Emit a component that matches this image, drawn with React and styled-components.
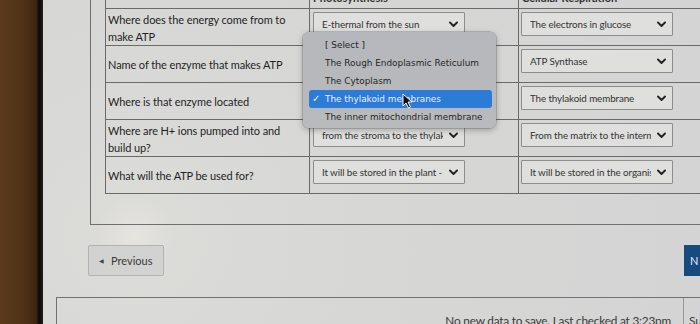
import React from "react";
import styled, { createGlobalStyle } from "styled-components";

const Global = createGlobalStyle`
  html, body { margin: 0; padding: 0; }
  body { width: 700px; height: 324px; overflow: hidden; background: #4a2f16; }
`;

const Frame = styled.div`
  position: relative;
  display: flex;
  width: 700px;
  height: 324px;
  overflow: hidden;
  font-family: Lato, "Open Sans", sans-serif;
`;

const Desk = styled.div`
  flex: none;
  width: 37px;
  background: linear-gradient(90deg, #5b3b1c 0%, #4d3116 70%, #3b2410 100%);
`;

const Bezel = styled.div`
  flex: none;
  width: 6px;
  background: linear-gradient(90deg, #24180e 0%, #0b0b0b 45%, #202020 100%);
`;

const Screen = styled.div`
  position: relative;
  flex: 1;
  display: flex;
  flex-direction: column;
  overflow: hidden;
  background: radial-gradient(circle at 92px 236px, #e6e4df 0, #dbdbd8 40px, #d7d8d6 220px, #d3d4d3 100%);
`;

const Panel = styled.div`
  flex: none;
  margin-left: 47px;
  width: 720px;
  border-left: 1px solid #6f6f6f;
  border-bottom: 1px solid #6f6f6f;
  padding: 0 0 30px 14px;
`;

const Table = styled.div`
  margin-top: -13px;
  display: grid;
  grid-template-columns: 204px 209px 220px;
  grid-auto-rows: 37px;
  grid-template-rows: 22px;
  border-left: 1px solid #6a6a6a;
`;

const Cell = styled.div`
  box-sizing: border-box;
  border-right: 1px solid #6a6a6a;
  border-bottom: 1px solid #6a6a6a;
  color: #262626;
`;

const HeadCell = styled(Cell)`
  display: flex;
  align-items: flex-end;
  padding: 0 0 4px 3px;
  font-size: 11px;
  font-weight: 700;
  line-height: 12px;
  color: #333;
`;

const Question = styled(Cell)`
  display: flex;
  align-items: center;
  padding: 1px 4px 0 2px;
  font-size: 11px;
  line-height: 17px;
  letter-spacing: -0.1px;
  color: #1f1f1f;
`;

const AnswerCell = styled(Cell)`
  padding: 3px 0 0 ${(p) => p.$pad || 3}px;
`;

const Select = styled.div`
  box-sizing: border-box;
  display: flex;
  align-items: center;
  justify-content: space-between;
  gap: 6px;
  width: 152px;
  height: 24px;
  padding: 0 6px 0 8px;
  border: 1px solid #8d8d8d;
  border-radius: 1px;
  background: #dfdfdd;
  font-size: 9.8px;
  letter-spacing: -0.1px;
  color: #333;
  white-space: nowrap;
`;

const SelectText = styled.span`
  overflow: hidden;
  flex: 1;
`;

const Chevron = () => (
  <svg width="9" height="7" viewBox="0 0 9 7">
    <polyline points="1,1.5 4.5,5 8,1.5" fill="none" stroke="#222" strokeWidth="1.9" strokeLinecap="round" strokeLinejoin="round" />
  </svg>
);

const Nav = styled.div`
  flex: none;
  display: flex;
  align-items: stretch;
  height: 31px;
  margin-top: 20px;
`;

const PrevButton = styled.div`
  box-sizing: border-box;
  display: flex;
  align-items: center;
  gap: 7px;
  margin-left: 45px;
  width: 76px;
  padding-left: 10px;
  border: 1px solid #b2b2b0;
  border-radius: 2px;
  background: #d2d3d1;
  font-size: 11px;
  color: #3a3a3a;
`;

const Tri = styled.span`
  font-size: 6px;
  color: #444;
`;

const NextButton = styled.div`
  flex: none;
  margin-left: auto;
  margin-right: -24px;
  width: 40px;
  padding-left: 6px;
  box-sizing: border-box;
  display: flex;
  align-items: center;
  background: #174a7f;
  color: #e8eef5;
  font-size: 11px;
`;

const StatusBar = styled.div`
  flex: none;
  display: flex;
  margin-top: 21px;
  margin-left: 13px;
  margin-right: -44px;
  border-top: 1px solid #717171;
  border-left: 1px solid #717171;
  height: 40px;
`;

const Status = styled.div`
  flex: 1;
  text-align: right;
  padding: 15px 12px 0 0;
  font-size: 11.8px;
  color: #3a3a3a;
  letter-spacing: -0.2px;
`;

const SaveCell = styled.div`
  flex: none;
  width: 55px;
  padding: 15px 0 0 5px;
  border-left: 1px solid #9a9a9a;
  font-size: 11.8px;
  color: #3a3a3a;
`;

const Menu = styled.div`
  position: absolute;
  left: 303px;
  top: 32px;
  box-sizing: border-box;
  width: 193px;
  height: 96px;
  padding: 4px 4px 0 6px;
  border-radius: 6px;
  background: linear-gradient(180deg, #b6b7bc 0%, #b9babd 100%);
  box-shadow: 0 2px 6px rgba(0, 0, 0, 0.28), 0 0 0 0.5px rgba(90, 90, 95, 0.5);
  font-family: "DejaVu Sans", Verdana, sans-serif;
`;

const Item = styled.div`
  position: relative;
  height: 18px;
  line-height: 18px;
  padding-left: 16px;
  border-radius: 3px;
  font-size: 8.9px;
  white-space: nowrap;
  color: ${(p) => (p.$active ? "#e9f1fb" : "#262628")};
  background: ${(p) => (p.$active ? "#2c7bd6" : "transparent")};
`;

const Check = styled.span`
  position: absolute;
  left: 3px;
  top: 0;
  font-size: 10px;
`;

const Cursor = styled.svg`
  position: absolute;
  left: 402px;
  top: 93px;
`;

const rows = [
  {
    q: ["Where does the energy come from to", "make ATP"],
    a: "E-thermal from the sun",
    b: "The electrons in glucose",
  },
  { q: ["Name of the enzyme that makes ATP"], a: "The thylakoid membranes", b: "ATP Synthase" },
  { q: ["Where is that enzyme located"], a: "The thylakoid membranes", b: "The thylakoid membrane" },
  {
    q: ["Where are H+ ions pumped into and", "build up?"],
    a: "from the stroma to the thylakoid space",
    b: "From the matrix to the intermembrane space",
  },
  {
    q: ["What will the ATP be used for?"],
    a: "It will be stored in the plant - ",
    b: "It will be stored in the organism",
  },
];

const options = [
  "[ Select ]",
  "The Rough Endoplasmic Reticulum",
  "The Cytoplasm",
  "The thylakoid membranes",
  "The inner mitochondrial membrane",
];

export default function App() {
  return (
    <>
      <Global />
      <Frame>
        <Desk />
        <Bezel />
        <Screen>
          <Panel>
            <Table>
              <HeadCell />
              <HeadCell>Photosynthesis</HeadCell>
              <HeadCell>Cellular Respiration</HeadCell>
              {rows.map((r, i) => (
                <React.Fragment key={i}>
                  <Question>
                    <span>
                      {r.q.map((line, j) => (
                        <React.Fragment key={j}>
                          {j > 0 && <br />}
                          {line}
                        </React.Fragment>
                      ))}
                    </span>
                  </Question>
                  <AnswerCell $pad={3}>
                    <Select>
                      <SelectText>{r.a}</SelectText>
                      <Chevron />
                    </Select>
                  </AnswerCell>
                  <AnswerCell $pad={2}>
                    <Select>
                      <SelectText>{r.b}</SelectText>
                      <Chevron />
                    </Select>
                  </AnswerCell>
                </React.Fragment>
              ))}
            </Table>
          </Panel>
          <Nav>
            <PrevButton>
              <Tri>◀</Tri>
              Previous
            </PrevButton>
            <NextButton>N</NextButton>
          </Nav>
          <StatusBar>
            <Status>No new data to save. Last checked at 3:23pm</Status>
            <SaveCell>Submit</SaveCell>
          </StatusBar>
        </Screen>
        <Menu>
          {options.map((o, i) => (
            <Item key={o} $active={i === 3}>
              {i === 3 && <Check>✓</Check>}
              {o}
            </Item>
          ))}
        </Menu>
        <Cursor width="11" height="16" viewBox="0 0 11 16">
          <path d="M1 1 L1 13 L4 10 L6.5 15 L8.5 14 L6 9 L10 9 Z" fill="#111" stroke="#f4f4f4" strokeWidth="1" strokeLinejoin="round" />
        </Cursor>
      </Frame>
    </>
  );
}
